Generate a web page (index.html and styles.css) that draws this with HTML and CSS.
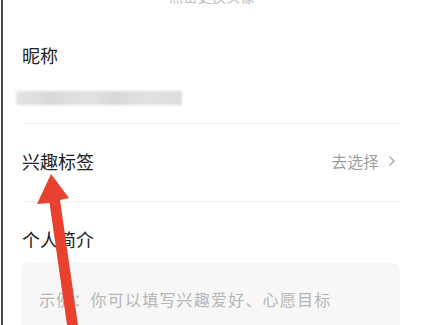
FILE: index.html
```html
<!DOCTYPE html>
<html lang="zh-CN">
<head>
<meta charset="utf-8">
<link rel="stylesheet" href="styles.css">
</head>
<body>
<div class="page">
  <div class="avatar-hint">点击更换头像</div>
  <div class="nick">
    <div class="label">昵称</div>
    <div class="nick-input"><div class="blur-bar"></div></div>
  </div>
  <div class="row">
    <div class="label">兴趣标签</div>
    <div class="action">去选择<svg class="chev" width="8" height="12" viewBox="0 0 8 12"><polyline points="1.5,1.5 6,6 1.5,10.5" fill="none" stroke="#a8a8a8" stroke-width="1.3"/></svg></div>
  </div>
  <div class="intro">
    <div class="label">个人简介</div>
    <div class="intro-box">示例：你可以填写兴趣爱好、心愿目标</div>
  </div>
  <svg class="arrow" width="423" height="325" viewBox="0 0 423 325">
    <polygon points="51,174 69,198 60,200 78,325 67,325 49.5,203 37,204" fill="#e8412f"/>
  </svg>
</div>
</body>
</html>
```
FILE: styles.css
```css
html, body {
  margin: 0;
  padding: 0;
  background: #fff;
  overflow: hidden;
}
body {
  font-family: "Noto Sans CJK SC", "Noto Sans", sans-serif;
  color: #222;
}
.page {
  position: relative;
  margin-left: 1px;
  border-left: 2px solid #4a4a4a;
  padding: 0 23px 0 19px;
  height: 325px;
  overflow: hidden;
}
.avatar-hint {
  margin-top: -14px;
  height: 20px;
  line-height: 20px;
  font-size: 14px;
  color: #bdbdbd;
  text-align: center;
  padding-left: 2px;
  letter-spacing: 0.3px;
}
.label {
  font-size: 18px;
  line-height: 24px;
  height: 24px;
}
.nick {
  padding-top: 37px;
  border-bottom: 1px solid #f1f1f1;
  padding-bottom: 18px;
  margin-left: 0;
}
.nick-input {
  margin-top: 24px;
  margin-left: -6px;
  height: 14px;
  display: flex;
}
.blur-bar {
  width: 166px;
  height: 14px;
  border-radius: 3px 0 0 3px;
  background: linear-gradient(90deg, #e4e4e4 0%, #d9d9d9 20%, #e2e2e2 45%, #d8d8d8 60%, #e1e1e1 80%, #dcdcdc 100%);
  filter: blur(0.8px);
}
.row {
  height: 74px;
  padding-bottom: 3px;
  display: flex;
  align-items: center;
  justify-content: space-between;
  border-bottom: 1px solid #f1f1f1;
}
.action {
  display: flex;
  align-items: center;
  font-size: 15.5px;
  color: #9c9c9c;
  letter-spacing: 0.3px;
  margin-right: 4px;
}
.chev {
  margin-left: 9px;
}
.intro {
  padding-top: 25px;
}
.intro-box {
  margin-top: 12px;
  margin-left: -1px;
  height: 80px;
  background: #f7f7f7;
  border-radius: 7px;
  padding: 24px 0 0 18px;
  box-sizing: border-box;
  font-size: 16px;
  line-height: 24px;
  letter-spacing: 1.2px;
  color: #b5b5b5;
}
.arrow {
  position: absolute;
  left: -3px;
  top: 0;
  pointer-events: none;
}
```
